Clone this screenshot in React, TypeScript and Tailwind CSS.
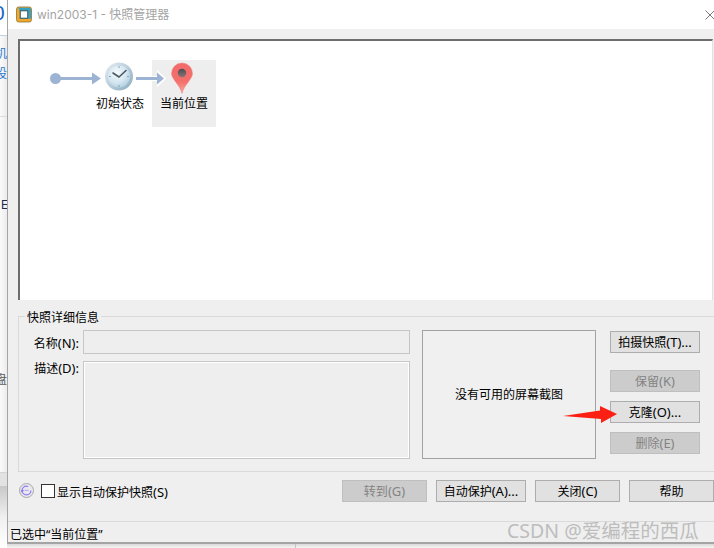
const font = "font-['Noto_Sans','Noto_Sans_CJK_SC',sans-serif]";

function Btn({ label, latin, disabled, w = "w-[90px]" }: { label: string; latin?: string; disabled?: boolean; w?: string }) {
  return (
    <div
      className={`${w} h-[22px] flex items-center justify-center text-[12px] leading-none border pt-[1px] ${
        disabled ? "bg-[#cccccc] border-[#bfbfbf] text-[#838383]" : "bg-[#e1e1e1] border-[#adadad] text-black"
      }`}
    >
      {label}
      {latin && <span className="text-[13px] leading-none">{latin}</span>}
    </div>
  );
}

function LeftStrip() {
  return (
    <div className="w-[7px] h-full overflow-hidden flex flex-col shrink-0 bg-[#f2f2f2]">
      <div className="h-[36px] bg-white border-b border-[#bcd4ea] overflow-hidden flex items-start">
        <span className="text-[#1a66c8] text-[21px] leading-none -ml-[7px] mt-[2px] font-['Liberation_Sans',sans-serif]">0</span>
      </div>
      <div className="h-[81px] border-b border-[#dcdcdc] overflow-hidden flex flex-col pt-[11px] gap-[6px] bg-gradient-to-r from-[#fafafa] to-[#ececec]">
        <span className="text-[#2a78d0] text-[12px] leading-[14px] -ml-[5px]">机</span>
        <span className="text-[#2a78d0] text-[12px] leading-[14px] -ml-[5px]">设</span>
      </div>
      <div className="h-[80px] shrink-0 bg-gradient-to-r from-[#fafafa] to-[#ececec]" />
      <div className="h-[16px] shrink-0 overflow-hidden flex items-center bg-gradient-to-r from-[#fafafa] to-[#ececec]">
        <span className="text-[#1c2a50] text-[12px] leading-none ml-[1px] font-['Liberation_Sans',sans-serif]">E</span>
      </div>
      <div className="h-[174px] shrink-0 overflow-hidden flex flex-col justify-end bg-gradient-to-r from-[#fafafa] to-[#ececec]">
        <span className="text-[#5a5a5a] text-[12px] leading-[14px] -ml-[5px]">盘</span>
      </div>
      <div className="h-[86px] shrink-0 border-b border-[#d4d4d4] bg-gradient-to-r from-[#fafafa] to-[#ececec]" />
      <div className="h-[13px] shrink-0 bg-[#e2e2e2]" />
      <div className="flex-1 bg-gradient-to-b from-[#c8c8c8] via-[#f0f0f0] to-white" />
    </div>
  );
}

function Diagram() {
  return (
    <>
      <div className="absolute left-[132px] top-[19px] w-[64px] h-[67px] bg-[#eeeeee]" />
      <svg className="absolute left-0 top-0" width="220" height="90" viewBox="0 0 220 90">
        <defs>
          <radialGradient id="clockFace" cx="0.4" cy="0.35" r="0.8">
            <stop offset="0" stopColor="#f6fbfd" />
            <stop offset="0.55" stopColor="#d3e5f0" />
            <stop offset="1" stopColor="#a4c5da" />
          </radialGradient>
          <linearGradient id="clockRim" x1="0" y1="0" x2="1" y2="1">
            <stop offset="0" stopColor="#e6eff4" />
            <stop offset="1" stopColor="#8aaabf" />
          </linearGradient>
          <linearGradient id="pin" x1="0" y1="0" x2="0" y2="1">
            <stop offset="0" stopColor="#f2696a" />
            <stop offset="0.6" stopColor="#f4706c" />
            <stop offset="1" stopColor="#f9a8a0" />
          </linearGradient>
          <linearGradient id="pinDot" x1="0" y1="0" x2="0" y2="1">
            <stop offset="0" stopColor="#4e4c50" />
            <stop offset="1" stopColor="#8a7478" />
          </linearGradient>
        </defs>
        <circle cx="35.5" cy="37.5" r="5.5" fill="#9db3d4" />
        <rect x="36" y="36" width="40" height="3" fill="#9db3d4" />
        <path d="M72 31.5 L81 37.5 L72 43.5 Z" fill="#9db3d4" />
        <circle cx="99" cy="35.5" r="14" fill="url(#clockRim)" />
        <circle cx="99" cy="35.5" r="11" fill="url(#clockFace)" />
        <path d="M99 36 L93 32 M99 36 L106 29.5" stroke="#4a5868" strokeWidth="1.6" strokeLinecap="round" fill="none" />
        <path d="M99 25 v2 M99 44 v2 M89 35.5 h2 M107 35.5 h2" stroke="#8aa3b6" strokeWidth="1" />
        <path d="M116 36 H138 V31 L145 37.5 L138 44 V39 H116 Z" fill="#ffffff" stroke="#ffffff" strokeWidth="2" />
        <rect x="116" y="36" width="24" height="3" fill="#9db3d4" />
        <path d="M137 31.5 L144 37.5 L137 43.5 Z" fill="#9db3d4" />
        <path d="M162 52.5 C160 44 151.5 38 151.5 32.5 A10.5 10.5 0 0 1 172.5 32.5 C172.5 38 164 44 162 52.5 Z" fill="url(#pin)" stroke="#e8837f" strokeWidth="0.5" />
        <circle cx="162" cy="32" r="4.2" fill="url(#pinDot)" />
      </svg>
      <span className="absolute left-[76px] top-[53px] text-[12px] leading-[20px] text-black">初始状态</span>
      <span className="absolute left-[140px] top-[53px] text-[12px] leading-[20px] text-black">当前位置</span>
    </>
  );
}

export default function App() {
  return (
    <div className={`relative w-[714px] h-[548px] overflow-hidden flex bg-white ${font}`}>
      <LeftStrip />
      <div className="flex-1 min-w-0 flex flex-col">
        <div className="h-[544px] flex flex-col bg-[#efefef] border-l border-b-2 border-[#a4a4a4] shrink-0">
          <div className="h-[29px] bg-white flex items-center pl-[8px] shrink-0">
            <svg width="16" height="17" viewBox="0 0 17 17">
              <rect x="0.5" y="0.5" width="16" height="16" rx="2.5" fill="#f0a92e" stroke="#8a6a2a" strokeWidth="0.8" />
              <path d="M3 1.2 H14 A2 2 0 0 1 16 3 V13 H13 V4 H3 Z" fill="#34a3c4" />
              <rect x="4.5" y="4.5" width="8" height="8" fill="#ffffff" stroke="#2b5f75" strokeWidth="1.2" />
            </svg>
            <span className="ml-[5px] text-[12px] leading-none text-[#a4a4a4] font-['Inter','Noto_Sans_CJK_SC',sans-serif]">win2003-1 - 快照管理器</span>
            <svg className="ml-auto mr-[-1px]" width="10" height="10" viewBox="0 0 10 10">
              <path d="M0.5 0.5 L9.5 9.5 M9.5 0.5 L0.5 9.5" stroke="#7a7a7a" strokeWidth="1" />
            </svg>
          </div>

          <div className="pt-[10px] pl-[10px] pr-[1px] shrink-0">
            <div className="relative h-[261px] bg-white border-t-2 border-l-2 border-[#6d6d6d] border-r border-b-0 border-r-[#e2e2e2]">
              <Diagram />
            </div>
          </div>

          <div className="mt-[16px] ml-[10px] h-[156px] border border-r-0 border-[#d9d9d9] relative shrink-0 flex pt-[13px]">
            <span className="absolute left-[6px] -top-[8px] px-[2px] bg-[#efefef] text-[12px] leading-[18px] text-black">快照详细信息</span>
            <div className="w-[391px] flex flex-col gap-[7px] shrink-0">
              <div className="flex h-[24px]">
                <span className="w-[60px] text-right text-[12px] leading-[26px] text-black whitespace-nowrap">
                  名称<span className="text-[13px]">(N):</span>
                </span>
                <div className="ml-[4px] flex-1 border border-[#c6c6c6] bg-[#eeeeee]" />
              </div>
              <div className="flex h-[98px]">
                <span className="w-[60px] text-right text-[12px] leading-[15px] text-black whitespace-nowrap">
                  描述<span className="text-[13px]">(D):</span>
                </span>
                <div className="ml-[4px] flex-1 border border-[#c6c6c6] bg-[#eeeeee] outline outline-1 -outline-offset-2 outline-white" />
              </div>
            </div>
            <div className="ml-[12px] w-[174px] h-[129px] border border-[#a2a2a2] bg-[#f0f0f0] flex items-center justify-center text-[12px] text-black shrink-0">
              没有可用的屏幕截图
            </div>
            <div className="ml-[14px] w-[90px] flex flex-col shrink-0 pt-[1px]">
              <Btn label="拍摄快照" latin="(T)..." />
              <div className="mt-[17px] flex flex-col gap-[9px]">
                <Btn label="保留" latin="(K)" disabled />
                <Btn label="克隆" latin="(O)..." />
                <Btn label="删除" latin="(E)" disabled />
              </div>
            </div>
          </div>

          <div className="h-[49px] flex items-start pl-[11px] shrink-0 pt-[8px]">
            <svg className="mt-[3px]" width="15" height="15" viewBox="0 0 15 15">
              <circle cx="7.5" cy="7.5" r="7" fill="#e8e8ee" stroke="#a8a8a8" strokeWidth="1" />
              <circle cx="7.5" cy="7.5" r="4.4" fill="none" stroke="#8d7cf0" strokeWidth="1.2" strokeDasharray="22 6" />
              <path d="M1.5 7 L5 7 L3.2 10 Z" fill="#8d7cf0" />
              <rect x="5.6" y="6.8" width="4" height="1.2" fill="#b9b0f2" />
            </svg>
            <div className="ml-[7px] mt-[4px] w-[14px] h-[14px] border border-[#333333] bg-white shrink-0" />
            <span className="ml-[2px] mt-[5px] text-[12px] leading-[14px] text-black">
              显示自动保护快照<span className="text-[13px]">(S)</span>
            </span>
            <div className="ml-auto flex gap-[9px]">
              <Btn label="转到" latin="(G)" disabled w="w-[85px]" />
              <Btn label="自动保护" latin="(A)..." w="w-[90px]" />
              <Btn label="关闭" latin="(C)" w="w-[85px]" />
              <Btn label="帮助" w="w-[85px]" />
            </div>
          </div>

          <div className="flex-1 border-t border-[#dadada] flex items-center pl-[2px] pt-[5px] text-[12px] leading-none text-black">
            已选中“当前位置”
          </div>
        </div>
        <div className="flex-1 flex bg-gradient-to-b from-[#d9d9d9] to-[#f5f5f5]">
          <div className="ml-[288px] w-[1px] bg-[#c4c4c4]" />
        </div>
      </div>

      <svg className="absolute left-[560px] top-[402px]" width="60" height="24" viewBox="0 0 60 24">
        <path d="M3 14 L40 8.5 L40 4 L57 12 L41 21 L41 17 Z" fill="#fb1f14" />
      </svg>
      <span className="absolute left-[507px] top-[517px] text-[19.5px] leading-[28px] text-[#bdbdbd] whitespace-nowrap">CSDN @爱编程的西瓜</span>
    </div>
  );
}
